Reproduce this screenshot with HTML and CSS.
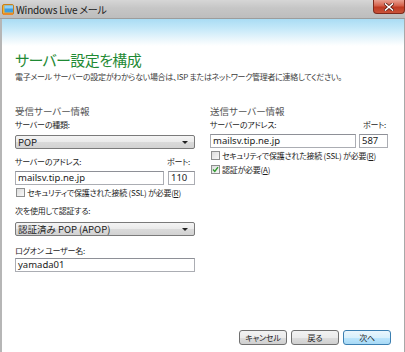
FILE: index.html
```html
<!DOCTYPE html>
<html lang="ja">
<head>
<meta charset="utf-8">
<title>Windows Live メール</title>
<link rel="stylesheet" href="styles.css">
</head>
<body>
<div class="window">
  <div class="titlebar">
    <svg class="appicon" width="12" height="12" viewBox="0 0 12 12" aria-hidden="true">
      <rect x="0.5" y="0.5" width="11" height="10" rx="1.5" fill="#f2b233" stroke="#c9801a"/>
      <rect x="2.5" y="1.5" width="8.5" height="7" rx="0.5" fill="#3f9fe0"/>
      <rect x="2.5" y="1.5" width="8.5" height="3" fill="#8fd0f6"/>
      <rect x="1" y="9" width="10" height="2" fill="#e98a2a"/>
    </svg>
    <span class="wtitle">Windows Live メール</span>
    <div class="close">
      <svg width="10" height="8" viewBox="0 0 10 8" aria-hidden="true">
        <path d="M1.5 1 L8.5 7 M8.5 1 L1.5 7" stroke="#5a1a10" stroke-width="3" stroke-linecap="square"/>
        <path d="M1.5 1 L8.5 7 M8.5 1 L1.5 7" stroke="#ffffff" stroke-width="1.6" stroke-linecap="square"/>
      </svg>
    </div>
  </div>
  <div class="client">
    <h1 class="title">サーバー設定を構成</h1>
    <p class="subtitle">電子メール サーバーの設定がわからない場合は、ISP またはネットワーク管理者に連絡してください。</p>
    <div class="cols">
      <section class="col col-in">
        <div class="heading">受信サーバー情報</div>
        <div class="label">サーバーの種類:</div>
        <div class="select sel-first"><span>POP</span><i class="arrow"></i></div>
        <div class="pair-labels pl-in"><span>サーバーのアドレス:</span><span class="portlabel">ポート:</span></div>
        <div class="pair pair-in"><div class="input grow">mailsv.tip.ne.jp</div><div class="input port">110</div></div>
        <div class="check"><span class="box"></span><span>セキュリティで保護された接続 (SSL) が必要(<u>R</u>)</span></div>
        <div class="label lab-auth">次を使用して認証する:</div>
        <div class="select sel-auth"><span>認証済み POP (APOP)</span><i class="arrow"></i></div>
        <div class="label lab-user">ログオン ユーザー名:</div>
        <div class="input user">yamada01</div>
      </section>
      <section class="col col-out">
        <div class="heading heading-out">送信サーバー情報</div>
        <div class="pair-labels pl-out"><span>サーバーのアドレス:</span><span class="portlabel">ポート:</span></div>
        <div class="pair pair-out"><div class="input grow">mailsv.tip.ne.jp</div><div class="input port">587</div></div>
        <div class="check"><span class="box"></span><span>セキュリティで保護された接続 (SSL) が必要(<u>R</u>)</span></div>
        <div class="check check-2"><span class="box checked"><svg width="7" height="7" viewBox="0 0 7 7" aria-hidden="true"><path d="M1 3.6 L2.8 5.4 L6 1.2" fill="none" stroke="#2f9a2f" stroke-width="1.4"/></svg></span><span>認証が必要(<u>A</u>)</span></div>
      </section>
    </div>
    <div class="buttons">
      <button class="btn">キャンセル</button>
      <button class="btn">戻る</button>
      <button class="btn btn-default">次へ</button>
    </div>
  </div>
</div>
</body>
</html>
```

FILE: styles.css
```css
* { box-sizing: border-box; }
html, body { margin: 0; padding: 0; }
body {
  width: 405px;
  height: 352px;
  overflow: hidden;
  background: #c4c4c4;
  font-family: "Noto Sans CJK JP", sans-serif;
  font-feature-settings: "palt";
  color: #1c1c1c;
}
.window {
  width: 405px;
  height: 352px;
  display: flex;
  flex-direction: column;
}
.titlebar {
  height: 19px;
  display: flex;
  align-items: flex-start;
  background: linear-gradient(to bottom, #d6d6d6 0, #c6c6c6 45%, #bdbdbd 100%);
  padding-left: 2px;
  border-bottom: 1px solid #9c9c9c;
}
.appicon { margin-top: 4px; flex: none; }
.wtitle {
  margin-left: 2px;
  margin-top: 2px;
  font-size: 10px;
  letter-spacing: -0.2px;
  line-height: 15px;
  color: #202020;
  white-space: nowrap;
}
.close {
  margin-left: auto;
  width: 32px;
  height: 14px;
  display: flex;
  align-items: center;
  justify-content: center;
  background: linear-gradient(to bottom, #e8a091 0, #d4604a 45%, #bf3a22 55%, #c9533a 100%);
  border: 1px solid #7e2a1c;
  border-top: none;
  border-radius: 0 0 4px 4px;
}
.client {
  flex: 1;
  display: flex;
  flex-direction: column;
  border-left: 2px solid #b6b6b6;
  border-right: 1px solid #a8a8a8;
  background: linear-gradient(to bottom, #a9dcf4 0, #c6e9f9 10px, #e9f6fc 20px, #ffffff 27px);
  padding: 31px 13px 7px 13px;
}
.title {
  margin: 0;
  font-size: 15px;
  letter-spacing: -0.6px;
  line-height: 20px;
  font-weight: normal;
  color: #1f8a34;
  white-space: nowrap;
}
.subtitle {
  margin: 1px 0 0;
  font-size: 8px;
  letter-spacing: -0.3px;
  line-height: 12px;
  color: #3c3c3c;
  white-space: nowrap;
}
.cols {
  display: grid;
  grid-template-columns: 180px 178px;
  column-gap: 15px;
  margin-top: 22px;
  font-size: 8px;
  letter-spacing: -0.25px;
}
.col { display: flex; flex-direction: column; }
.heading {
  font-size: 9.5px;
  letter-spacing: 0;
  line-height: 12px;
  color: #555;
  white-space: nowrap;
}
.label, .pair-labels {
  line-height: 12px;
  white-space: nowrap;
}
.label { margin-top: 2px; }
.pair-labels { display: flex; }
.pair-labels .portlabel { margin-left: auto; }
.pl-in { margin-top: 7px; }
.pl-in .portlabel { width: 28px; }
.pl-out { margin-top: 2px; }
.pl-out .portlabel { width: 25px; }
.select {
  height: 14px;
  display: flex;
  align-items: center;
  padding: 0 6px 0 2px;
  border: 1px solid #7a7a7a;
  border-radius: 2px;
  background: linear-gradient(to bottom, #f4f4f4 0, #eaeaea 50%, #dadada 51%, #d2d2d2 100%);
  white-space: nowrap;
  font-size: 9.5px;
  letter-spacing: 0;
}
.select span { flex: 1; }
.sel-first { margin-top: 4px; }
.sel-auth { margin-top: 5px; }
.arrow {
  width: 0;
  height: 0;
  border-left: 3px solid transparent;
  border-right: 3px solid transparent;
  border-top: 3px solid #222;
}
.pair { display: flex; margin-top: 3px; }
.pair-in { gap: 4px; }
.pair-out { gap: 3px; }
.input {
  height: 14px;
  border: 1px solid #abadb3;
  border-top-color: #8e9097;
  background: #fff;
  font-family: "Noto Sans", sans-serif;
  font-size: 9.5px;
  letter-spacing: 0;
  line-height: 12px;
  padding-left: 2px;
  white-space: nowrap;
  color: #1a1a1a;
}
.input.grow { flex: 1; }
.pair-in .port { width: 27px; }
.pair-out .port { width: 29px; }
.check {
  display: flex;
  align-items: center;
  height: 13px;
  margin-top: 1px;
  white-space: nowrap;
}
.check-2 { margin-top: 1px; }
.box {
  width: 9px;
  height: 9px;
  flex: none;
  margin: 0 2px 0 1px;
  border: 1px solid #8e8f8f;
  background: linear-gradient(135deg, #dcdcdc 0, #f8f8f8 100%);
  display: flex;
  align-items: center;
  justify-content: center;
}
.lab-auth { margin-top: 6px; }
.lab-user { margin-top: 9px; }
.user { margin-top: 1px; }
u { text-decoration: underline; }
.buttons {
  margin-top: auto;
  display: flex;
  justify-content: flex-end;
  gap: 4px;
}
.btn {
  width: 48px;
  height: 15px;
  padding: 0;
  font-family: "Noto Sans CJK JP", sans-serif;
  font-feature-settings: "palt";
  font-size: 8px;
  letter-spacing: -0.2px;
  line-height: 12px;
  color: #1c1c1c;
  border: 1px solid #707070;
  border-radius: 3px;
  background: linear-gradient(to bottom, #f2f2f2 0, #ebebeb 50%, #dddddd 51%, #cfcfcf 100%);
}
.btn-default {
  border-color: #3c7fb1;
  background: linear-gradient(to bottom, #eaf6fd 0, #d9f0fc 50%, #bee6fd 51%, #a7d9f5 100%);
}
```
